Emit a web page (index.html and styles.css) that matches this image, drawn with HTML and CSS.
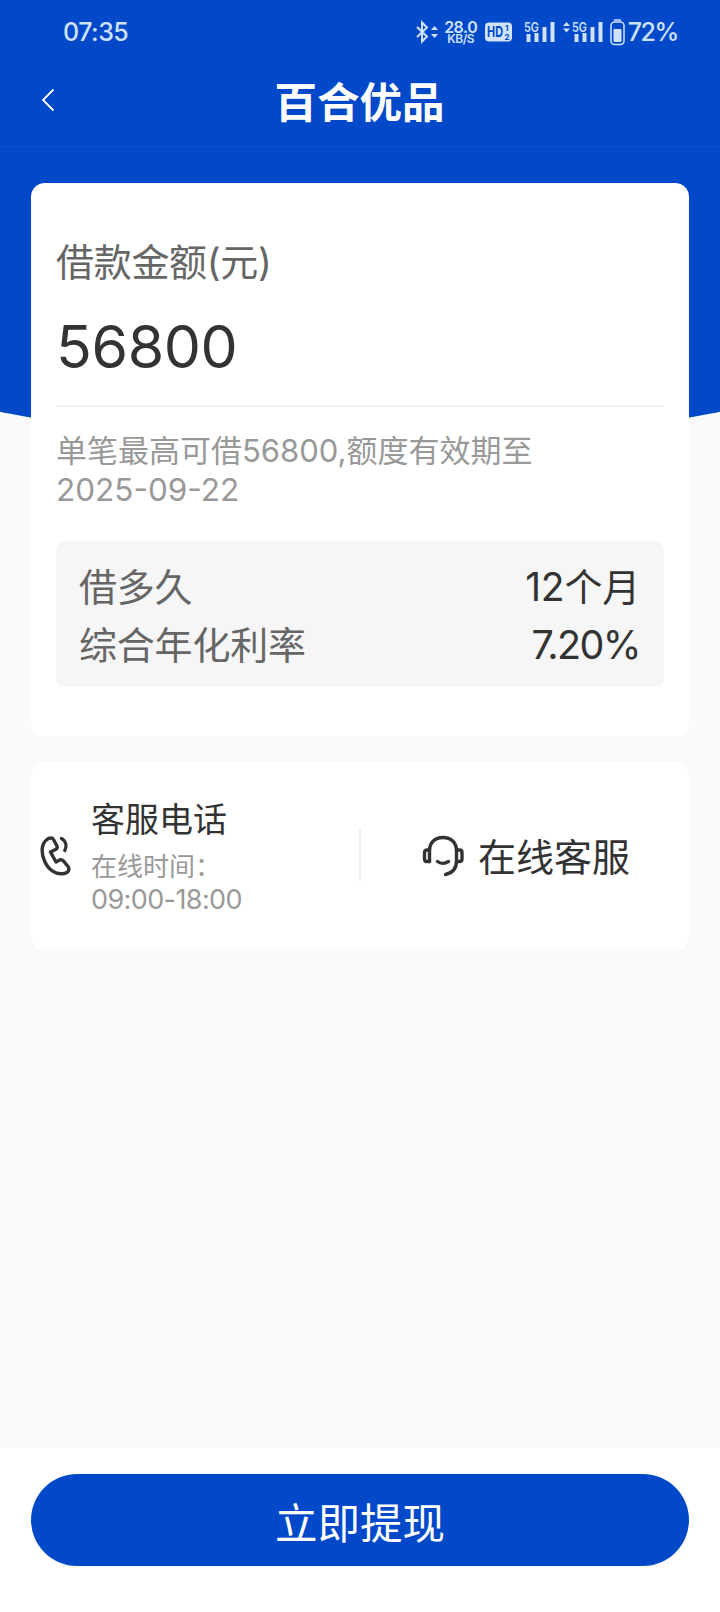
FILE: index.html
```html
<!DOCTYPE html>
<html lang="zh-CN">

<head>
    <meta charset="UTF-8">
    <meta name="viewport" content="width=device-width, initial-scale=1.0">
    <title>百合优品</title>
    <link rel="stylesheet" href="styles.css">
</head>

<body>
    <div class="top-bg"></div>

    <div class="status-bar">
        <span class="time">07:35</span>
        <div class="status-icons">
            <svg class="bluetooth" width="24" height="26" viewBox="0 0 24 26">
                <path d="M2 8 L12 17.5 L7 22.5 V3.5 L12 8.5 L2 18" fill="none" stroke="#cfe2ff" stroke-width="2" />
                <path d="M16 11 L19.5 7 L23 11 Z M16 15 L19.5 19 L23 15 Z" fill="#cfe2ff" />
            </svg>
            <div class="speed">
                <span class="speed-num">28.0</span>
                <span class="speed-unit">KB/S</span>
            </div>
            <svg class="hd" width="27" height="20" viewBox="0 0 27 20">
                <rect x="0" y="0.5" width="27" height="19" rx="4" fill="#cfe2ff" />
                <text x="2" y="15" class="hd-text" textLength="16" lengthAdjust="spacingAndGlyphs">HD</text>
                <text x="20" y="9" class="hd-small">1</text>
                <text x="19.5" y="18" class="hd-small">2</text>
            </svg>
            <svg class="signal" width="32" height="24" viewBox="0 0 32 24">
                <text x="0" y="11.5" class="net" textLength="15" lengthAdjust="spacingAndGlyphs">5G</text>
                <path d="M2.5 14h4v8h-4z M10.5 13h4v9h-4z M18.5 7h4v15h-4z M26.5 2h4v20h-4z" fill="#cfe2ff" />
            </svg>
            <svg class="signal second" width="41" height="24" viewBox="-9 0 41 24">
                <path d="M-9 6 L-5.5 2 L-2 6 Z M-9 8.5 L-5.5 12.5 L-2 8.5 Z" fill="#cfe2ff" />
                <text x="0" y="11.5" class="net" textLength="15" lengthAdjust="spacingAndGlyphs">5G</text>
                <path d="M2.5 14h4v8h-4z M10.5 13h4v9h-4z M18.5 7h4v15h-4z M26.5 2h4v20h-4z" fill="#cfe2ff" />
            </svg>
            <svg class="battery" width="15" height="27" viewBox="0 0 15 27">
                <path d="M4 1h7" stroke="#cfe2ff" stroke-width="1.5" />
                <rect x="1" y="3" width="13" height="22.5" rx="3.5" fill="none" stroke="#cfe2ff" stroke-width="1.5" />
                <rect x="3.5" y="10" width="8" height="13" rx="1" fill="#cfe2ff" />
            </svg>
            <span class="percent">72%</span>
        </div>
    </div>

    <header class="nav">
        <svg class="back" width="14" height="24" viewBox="0 0 14 24">
            <path d="M12.5 1.5 L2 12 L12.5 22.5" fill="none" stroke="#fff" stroke-width="1.8" />
        </svg>
        <h1>百合优品</h1>
    </header>

    <main>
        <section class="card loan">
            <div class="label">借款金额(元)</div>
            <div class="amount">56800</div>
            <p class="desc">单笔最高可借56800,额度有效期至<br><span class="date">2025-09-22</span></p>
            <div class="info">
                <div class="row">
                    <span>借多久</span>
                    <span class="value"><span class="num">12</span>个月</span>
                </div>
                <div class="row">
                    <span>综合年化利率</span>
                    <span class="value rate">7.20%</span>
                </div>
            </div>
        </section>

        <section class="card service">
            <a class="phone">
                <svg width="32" height="42" viewBox="0 0 32 42">
                    <g fill="none" stroke="#333" stroke-width="3.4" stroke-linecap="round" stroke-linejoin="round">
                        <path d="M7 4.5 C9 2.5 12.5 2.5 13.5 4.5 L17 11 C17.5 13 17 14 15.5 14.5 L10.5 17 L16 27 L20 24.8 C21.5 24.5 22.5 25 23.5 26 L28 31.5 C30 34 28.5 38 24 38.5 C15 40 8 34 4.5 26 C1 18 1 9 7 4.5 Z" />
                        <path d="M21.5 3.5 C26 6 27 11 24.8 15.5" />
                    </g>
                </svg>
                <div class="phone-text">
                    <div class="phone-title">客服电话</div>
                    <div class="phone-time">在线时间：<br><span class="hours">09:00-18:00</span></div>
                </div>
            </a>
            <div class="divider"></div>
            <a class="online">
                <svg width="42" height="42" viewBox="0 0 42 42">
                    <g fill="none" stroke="#333" stroke-width="3.4" stroke-linecap="round" stroke-linejoin="round">
                        <path d="M7.5 26.5 V16 C7.500 7.500 13 2.500 21 2.500 C29 2.500 34.500 7.500 34.500 16 V26 C34.500 33.500 30 38 23.500 39.500" />
                        <path d="M15.5 26.5 C18.500 28.800 23 28.800 26.500 26.500" />
                        <path d="M7.5 15 H5 Q2.5 15 2.5 17.500 V24 Q2.5 26.500 5 26.500 H7.5" />
                        <path d="M34.5 15 H37.5 Q40 15 40 17.500 V24 Q40 26.500 37.500 26.500 H34.5" />
                    </g>
                </svg>
                <span>在线客服</span>
            </a>
        </section>
    </main>

    <footer>
        <button class="submit">立即提现</button>
    </footer>
</body>

</html>
```
FILE: styles.css
```css
* {
    box-sizing: border-box;
}

body {
    margin: 0;
    height: 1612px;
    display: flex;
    flex-direction: column;
    position: relative;
    background-color: #fafafa;
    color: #333;
    font-family: Inter, "Noto Sans CJK SC", sans-serif;
}

/* blue area with a curved bottom edge */
.top-bg {
    position: absolute;
    top: 0;
    left: 0;
    width: 100%;
    height: 450px;
    background-color: #0149c9;
    clip-path: circle(1800px at 50% -1352px);
    z-index: -1;
}

.status-bar {
    height: 64px;
    padding: 0 42px 0 63px;
    display: flex;
    justify-content: space-between;
    align-items: center;
    color: #cfe2ff;
}

.time,
.percent {
    font-size: 25px;
    font-weight: 500;
    line-height: 30px;
    letter-spacing: -0.5px;
}

.status-icons {
    display: flex;
    align-items: center;
}

.speed {
    width: 34px;
    margin-left: 5px;
    display: flex;
    flex-direction: column;
    align-items: center;
    font-weight: 600;
}

.speed-num {
    font-size: 16px;
    line-height: 14px;
    letter-spacing: -0.5px;
}

.speed-unit {
    font-size: 12px;
    line-height: 10px;
    letter-spacing: -0.5px;
}

.hd {
    margin-left: 7px;
}

.hd-text {
    font-size: 15px;
    font-weight: 700;
    fill: #0149c9;
}

.hd-small {
    font-size: 8px;
    font-weight: 700;
    fill: #0149c9;
}

.signal {
    margin-left: 12px;
}

.second {
    margin-left: 7px;
}

.net {
    font-size: 13px;
    font-weight: 600;
    fill: #cfe2ff;
}

.battery {
    margin-left: 6px;
}

.status-icons .percent {
    margin-left: 3px;
    letter-spacing: -1.4px;
}

.nav {
    height: 83px;
    padding: 0 41px 5px;
    display: flex;
    align-items: center;
    border-bottom: 1px solid #0d50cc;
}

.back {
    margin-bottom: 6px;
}

.nav h1 {
    flex: 1;
    margin: 0 15px 0 0;
    color: #fff;
    font-size: 42.5px;
    line-height: 60px;
    text-align: center;
}

main {
    flex: 1;
    padding: 36px 31px 0;
}

.card {
    background-color: #fff;
    border-radius: 14px;
}

.loan {
    height: 553px;
    padding: 50px 25px 0;
}

.label {
    font-size: 38px;
    line-height: 58px;
    letter-spacing: -0.3px;
    color: #666;
}

.amount {
    height: 116px;
    font-size: 59px;
    line-height: 112px;
    letter-spacing: -0.4px;
    border-bottom: 2px solid #f2f2f2;
}

.desc {
    margin: 24px 0 32px;
    font-size: 31px;
    line-height: 39px;
    color: #999;
}

.date {
    font-size: 31.5px;
}

.info {
    height: 146px;
    padding: 17px 24px 0 23px;
    background-color: #f6f6f6;
    border-radius: 9px;
}

.row {
    height: 58px;
    display: flex;
    justify-content: space-between;
    font-size: 38px;
    line-height: 58px;
    letter-spacing: -0.2px;
    color: #666;
}

.value {
    color: #333;
}

.rate {
    font-size: 39.5px;
    letter-spacing: -1.6px;
}

.num {
    font-size: 39px;
}

.service {
    height: 187px;
    margin-top: 26px;
    display: flex;
    align-items: center;
}

.phone {
    width: 328px;
    padding-left: 9px;
    display: flex;
    align-items: center;
}

.phone-text {
    margin-left: 19px;
}

.phone-title {
    margin-bottom: 6px;
    font-size: 34px;
    line-height: 48px;
}

.phone-time {
    font-size: 26px;
    line-height: 33px;
    color: #999;
}

.hours {
    font-size: 27px;
    letter-spacing: -0.6px;
}

.divider {
    width: 2px;
    height: 54px;
    margin-bottom: 1px;
    background-color: #f0f0f0;
}

.online {
    flex: 1;
    padding-left: 2px;
    display: flex;
    align-items: center;
    justify-content: center;
    gap: 14px;
    font-size: 38px;
    line-height: 54px;
}

.online span {
    padding-top: 3px;
}

footer {
    height: 164px;
    padding: 26px 31px;
    background-color: #fff;
}

.submit {
    display: block;
    width: 100%;
    height: 92px;
    padding: 0;
    border: none;
    border-radius: 46px;
    background-color: #0149c9;
    color: #fff;
    font-family: inherit;
    font-size: 42.5px;
}
```
